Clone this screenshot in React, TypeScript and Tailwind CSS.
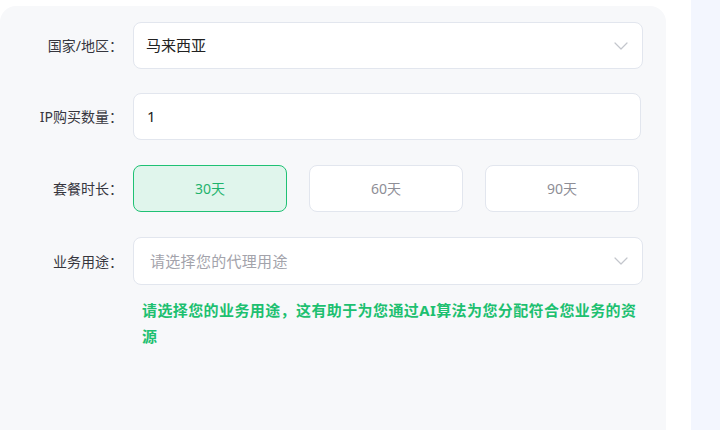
import { useState } from "react";

const font = { fontFamily: '"Noto Sans", "Noto Sans CJK SC", sans-serif' };

function Chevron() {
  return (
    <svg width="14" height="8" viewBox="0 0 14 8" fill="none" aria-hidden="true">
      <path d="M1 1l6 6 6-6" stroke="#c3c6cc" strokeWidth="1.2" strokeLinecap="round" strokeLinejoin="round" />
    </svg>
  );
}

function Label({ children }: { children: React.ReactNode }) {
  return (
    <div className="w-[123px] shrink-0 text-right text-[14px] text-[#36363e]">{children}</div>
  );
}

export default function App() {
  const [days, setDays] = useState(30);

  return (
    <div className="flex h-[430px] w-[720px] bg-white" style={font}>
      {/* Form panel */}
      <div className="mt-[6px] flex w-[666px] flex-col rounded-t-[16px] bg-[#f7f8fa] pt-[16px]">
        <div className="flex items-center gap-[10px]">
          <Label>国家/地区：</Label>
          <div className="flex h-[47px] w-[510px] items-center justify-between rounded-[8px] border border-[#e2e6ee] bg-white pl-[12px] pr-[14px]">
            <span className="text-[15px] text-[#222]">马来西亚</span>
            <Chevron />
          </div>
        </div>

        <div className="mt-[24px] flex items-center gap-[10px]">
          <Label>IP购买数量：</Label>
          <div className="flex h-[47px] w-[508px] items-center rounded-[8px] border border-[#e2e6ee] bg-white pl-[13px]">
            <span className="text-[15px] text-[#222]">1</span>
          </div>
        </div>

        <div className="mt-[25px] flex items-center gap-[10px]">
          <Label>套餐时长：</Label>
          <div className="flex gap-[22px]">
            {[30, 60, 90].map((d) =>
              d === days ? (
                <button
                  key={d}
                  onClick={() => setDays(d)}
                  className="flex h-[47px] w-[154px] items-center justify-center rounded-[8px] border border-[#1fc174] bg-[#e0f5ec] text-[14px] text-[#1fb36c]"
                >
                  {d}天
                </button>
              ) : (
                <button
                  key={d}
                  onClick={() => setDays(d)}
                  className="flex h-[47px] w-[154px] items-center justify-center rounded-[8px] border border-[#e2e6ee] bg-white text-[14px] text-[#8e8e96]"
                >
                  {d}天
                </button>
              )
            )}
          </div>
        </div>

        <div className="mt-[25px] flex items-center gap-[10px]">
          <Label>业务用途：</Label>
          <div className="flex h-[48px] w-[510px] items-center justify-between rounded-[8px] border border-[#e2e6ee] bg-white pl-[16px] pr-[14px]">
            <span className="text-[15px] tracking-[0.3px] text-[#a3a3ab]">请选择您的代理用途</span>
            <Chevron />
          </div>
        </div>

        <div className="mt-[12px] flex gap-[10px]">
          <div className="w-[123px] shrink-0" />
          <p className="w-[512px] pl-[9px] text-[15px] font-bold leading-[26px] tracking-[0.4px] text-[#1dc070]">
            请选择您的业务用途，这有助于为您通过AI算法为您分配符合您业务的资源
          </p>
        </div>
      </div>

      <div className="w-[25px]" />
      <div className="flex-1 bg-[#f3f6fe]" />
    </div>
  );
}
